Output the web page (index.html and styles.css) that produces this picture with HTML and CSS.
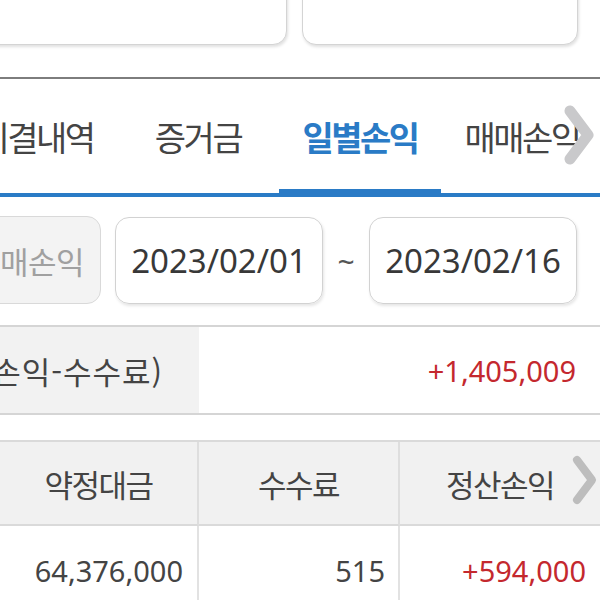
FILE: index.html
```html
<!DOCTYPE html>
<html lang="ko">
<head>
<meta charset="utf-8">
<link rel="stylesheet" href="styles.css">
</head>
<body>
<div class="page">
  <div class="top-cards">
    <div class="card card-left"></div>
    <div class="card card-right"></div>
  </div>
  <div class="divider"></div>

  <div class="tabbar">
    <div class="tabs">
      <div class="tab">미결내역</div>
      <div class="tab">증거금</div>
      <div class="tab active">일별손익</div>
      <div class="tab">매매손익</div>
    </div>
    <svg class="tab-arrow" width="32" height="60" viewBox="0 0 32 60"><path d="M7 6 L25 30 L7 54" fill="none" stroke="#c9c9cb" stroke-width="11" stroke-linecap="round" stroke-linejoin="round"/></svg>
  </div>

  <div class="date-row">
    <div class="mode-btn"><span>매매손익</span></div>
    <div class="date-box">2023/02/01</div>
    <div class="tilde">~</div>
    <div class="date-box">2023/02/16</div>
  </div>

  <div class="summary">
    <div class="summary-label"><span>정산손익(매매손익-수수료)</span></div>
    <div class="summary-value up">+1,405,009</div>
  </div>

  <div class="grid">
    <div class="th">약정대금</div>
    <div class="th">수수료</div>
    <div class="th th-last">정산손익
      <svg class="th-arrow" width="26" height="52" viewBox="0 0 26 52"><path d="M6 6 L21 26 L6 46" fill="none" stroke="#bdbdbd" stroke-width="8" stroke-linecap="round" stroke-linejoin="round"/></svg>
    </div>
    <div class="td td-first">64,376,000</div>
    <div class="td">515</div>
    <div class="td up">+594,000</div>
  </div>
</div>
</body>
</html>
```

FILE: styles.css
```css
html, body {
  margin: 0;
  padding: 0;
  background: #ffffff;
}

body {
  width: 600px;
  height: 600px;
  overflow: hidden;
  font-family: "Noto Sans", "Noto Sans CJK KR", sans-serif;
  color: #444444;
}

.page {
  width: 600px;
}

/* top cards (cut off at top) */
.top-cards {
  display: flex;
  gap: 15px;
  margin-left: -30px;
  margin-top: -40px;
}

.card {
  height: 83px;
  border: 1px solid #d4d4d4;
  border-radius: 14px;
  box-shadow: 1px 2px 3px rgba(0, 0, 0, 0.12);
  background: #fff;
}

.card-left {
  width: 315px;
}

.card-right {
  width: 274px;
}

.divider {
  margin-top: 32px;
  height: 2px;
  background: #7d7d7d;
}

/* tabs */
.tabbar {
  position: relative;
  width: 600px;
  overflow: hidden;
}

.tabs {
  display: flex;
  margin-left: -45px;
  width: 660px;
  border-bottom: 4px solid #2a7bc6;
}

.tab {
  flex: 0 0 162px;
  height: 114px;
  display: flex;
  align-items: center;
  justify-content: center;
  font-family: "Noto Sans CJK KR", sans-serif;
  font-size: 34px;
  letter-spacing: -2.5px;
  color: #444444;
  white-space: nowrap;
}

.tab.active {
  color: #2a7bc6;
  font-weight: 700;
  box-shadow: inset 0 -4px 0 #2a7bc6;
}

.tab-arrow {
  position: absolute;
  left: 563px;
  top: 26px;
}

/* date row */
.date-row {
  display: flex;
  align-items: center;
  margin-top: 19px;
  margin-left: -40px;
  height: 88px;
}

.mode-btn {
  flex: none;
  box-sizing: border-box;
  width: 141px;
  height: 88px;
  border: 1px solid #d9d9d9;
  border-radius: 14px;
  background: #f3f3f3;
  display: flex;
  align-items: center;
  justify-content: flex-end;
  overflow: hidden;
  padding-right: 16px;
  font-family: "Noto Sans CJK KR", sans-serif;
  font-size: 31px;
  letter-spacing: -0.5px;
  color: #a0a0a0;
  white-space: nowrap;
}

.date-box {
  flex: none;
  box-sizing: border-box;
  width: 208px;
  height: 87px;
  margin-left: 14px;
  border: 1px solid #d2d2d2;
  border-radius: 14px;
  box-shadow: 1px 2px 3px rgba(0, 0, 0, 0.1);
  display: flex;
  align-items: center;
  justify-content: center;
  font-size: 33px;
  color: #383838;
}

.tilde {
  flex: none;
  width: 46px;
  margin-right: -14px;
  text-align: center;
  font-size: 30px;
  color: #555555;
  padding-top: 2px;
}

/* summary */
.summary {
  display: flex;
  margin-top: 21px;
  height: 86px;
  border-top: 2px solid #d5d5d5;
  border-bottom: 2px solid #d5d5d5;
}

.summary-label {
  flex: 0 0 199px;
  box-sizing: border-box;
  background: #f2f2f2;
  display: flex;
  align-items: center;
  justify-content: flex-end;
  padding-right: 36px;
  overflow: hidden;
  white-space: nowrap;
  font-family: "Noto Sans CJK KR", sans-serif;
  font-size: 31px;
  letter-spacing: 1px;
  color: #444444;
}

.summary-value {
  flex: 1;
  display: flex;
  align-items: center;
  justify-content: flex-end;
  padding-right: 24px;
  font-size: 29px;
}

.up {
  color: #c4282e;
}

/* table */
.grid {
  display: grid;
  grid-template-columns: 199px 201px 1fr;
  margin-top: 25px;
  border-top: 2px solid #dadada;
}

.th {
  position: relative;
  height: 82px;
  background: #f1f1f1;
  border-bottom: 2px solid #dadada;
  border-right: 2px solid #dedede;
  display: flex;
  align-items: center;
  justify-content: center;
  font-family: "Noto Sans CJK KR", sans-serif;
  font-size: 31px;
  letter-spacing: -1.5px;
  color: #444444;
}

.th-last {
  border-right: none;
}

.th-arrow {
  position: absolute;
  left: 171px;
  top: 12px;
}

.td {
  height: 88px;
  border-right: 2px solid #e2e2e2;
  display: flex;
  align-items: center;
  justify-content: flex-end;
  padding-right: 13px;
  font-size: 29px;
  color: #444444;
}

.td-first {
  padding-right: 14px;
}

.td.up {
  border-right: none;
  padding-right: 14px;
  color: #c4282e;
}
```
